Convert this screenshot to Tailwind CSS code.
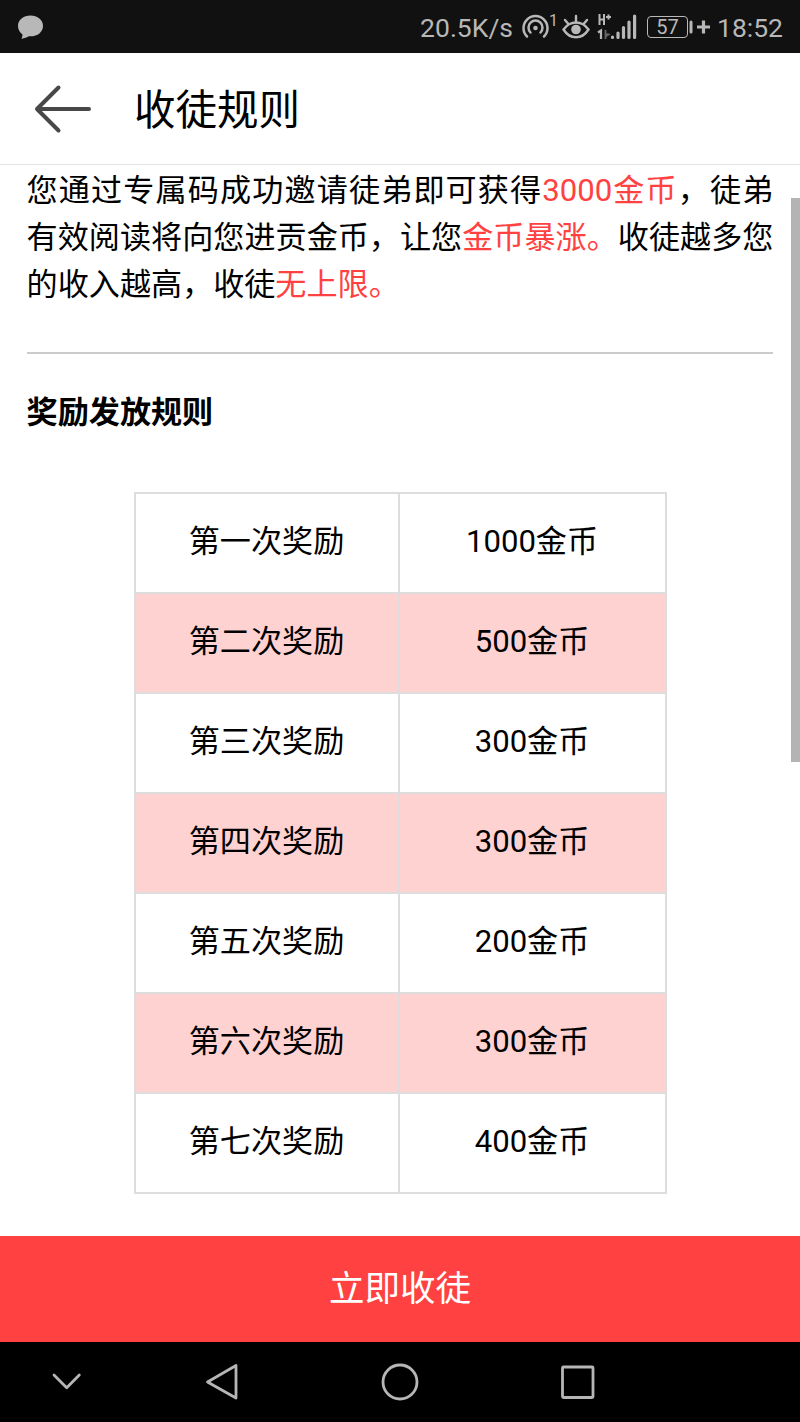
<!DOCTYPE html>
<html lang="zh-CN">
<head>
  <meta charset="UTF-8" />
  <meta name="viewport" content="width=device-width, initial-scale=1" />
  <title>收徒规则</title>
  <script src="https://cdn.jsdelivr.net/npm/@tailwindcss/browser@4"></script>
</head>
<body class="relative flex flex-col h-[1422px] overflow-hidden bg-white text-black font-[Roboto,'Noto_Sans_CJK_SC',sans-serif]">
  <!-- Status bar -->
  <div class="flex h-[53px] shrink-0 items-center justify-between bg-[#111] pl-[17px] pr-[17px] text-[#b8b8b8]">
    <svg class="h-[26px] w-[27px]" viewBox="0 0 27 26" fill="currentColor">
      <path d="M13.500 1.500C6.300 1.500 1 6 1 12c0 3.500 1.700 6.500 4.500 8.500-.1 1.800-.5 3-1 4.500 3-.7 5.500-1.700 7.500-2.700 8 .7 14-4 14-10.300 0-6-5.500-10.500-12.500-10.500z"/>
    </svg>
    <div class="flex items-center">
      <span class="mr-[8px] pt-[2px] text-[26.500px] leading-[51px]">20.5K/s</span>
      <!-- Hotspot -->
      <svg class="h-[30px] w-[38px]" viewBox="0 0 38 30" fill="none" stroke="currentColor" stroke-width="2.500" stroke-linecap="round">
        <path d="M6 24.500A12 12 0 1 1 23 24.500"/>
        <path d="M9.500 20.500A7 7 0 1 1 19.500 20.500"/>
        <circle cx="14.500" cy="16" r="2.300" fill="currentColor" stroke="none"/>
        <text x="28" y="14" font-size="16" fill="currentColor" stroke="none">1</text>
      </svg>
      <!-- Eye comfort -->
      <svg class="ml-[3px] h-[30px] w-[28px]" viewBox="0 0 28 30" fill="none" stroke="currentColor" stroke-width="2.400" stroke-linecap="round">
        <path d="M1.500 17.500C5 12.500 9 10.500 14 10.500s9 2 12.500 7C23 23 19 25.300 14 25.300S5 23 1.500 17.500z"/>
        <path d="M14 10V4M6 11.500L3 8M22 11.500l3-3.500"/>
        <circle cx="14" cy="17.500" r="4.800" fill="currentColor" stroke="none"/>
      </svg>
      <!-- Signal -->
      <svg class="ml-[7px] h-[30px] w-[42px]" viewBox="0 0 42 30" fill="none" stroke="currentColor">
        <path stroke-width="2" d="M2.500 2v11M7 2v11M2.500 7.500H7M9 5h5M11.500 2.500v5"/>
        <path stroke-width="2.200" d="M1 20.500l3-2v8.500"/>
        <path stroke="#666" stroke-width="1.800" d="M8.500 18v9M8.500 22l3 .5-3 2"/>
        <path stroke-width="3.200" stroke-linecap="round" d="M15.500 25v.5M21 21v4.500M26.500 15.500v10M32 10v15.500M37.600 4v21.500"/>
      </svg>
      <!-- Battery -->
      <div class="ml-[8px] flex h-[22px] w-[41px] items-center justify-center rounded-[4px] border-[1.500px] border-current text-[20px] leading-none">57</div>
      <svg class="h-[22px] w-[23px]" viewBox="0 0 23 22" fill="none" stroke="currentColor">
        <path stroke-width="3" stroke-linecap="round" d="M3 6v10"/>
        <path stroke-width="3.200" d="M9 11h13M15.500 4.500v13"/>
      </svg>
      <span class="ml-[6px] pt-[2px] text-[26.500px] leading-[51px]">18:52</span>
    </div>
  </div>

  <!-- Title bar -->
  <header class="flex h-[112px] shrink-0 items-center border-b border-[#e3e3e3] pl-[33px]">
    <svg class="h-[50px] w-[60px]" viewBox="0 0 60 50" fill="none" stroke="#484848" stroke-width="4" stroke-linecap="round" stroke-linejoin="round">
      <path d="M25.500 3.500L4 25 25.500 46.500M4 25h52"/>
    </svg>
    <h1 class="ml-[41px] pt-[4px] text-[41.500px] leading-[56px]">收徒规则</h1>
  </header>

  <!-- Rules -->
  <main class="flex flex-1 flex-col px-[26.600px] pt-[2px] text-[31.100px]">
    <p class="text-justify leading-[47px]">您通过专属码成功邀请徒弟即可获得<span class="text-[#ff4141]">3000金币</span>，徒弟有效阅读将向您进贡金币，让您<span class="text-[#ff4141]">金币暴涨。</span>收徒越多您的收入越高，收徒<span class="text-[#ff4141]">无上限。</span></p>
    <hr class="mt-[44px] border-t-2 border-[#ccc]" />
    <h2 class="mt-[35px] font-bold leading-[47px]">奖励发放规则</h2>
    <table class="mx-auto mt-[56px] w-[533px] table-fixed border-collapse text-center leading-[47px]">
      <tbody>
        <tr class="h-[100px]">
          <td class="w-[264px] border-2 border-[#ddd] pb-[3px]">第一次奖励</td>
          <td class="border-2 border-[#ddd] pb-[3px]">1000金币</td>
        </tr>
        <tr class="h-[100px] bg-[#ffd2d2]">
          <td class="border-2 border-[#ddd] pb-[3px]">第二次奖励</td>
          <td class="border-2 border-[#ddd] pb-[3px]">500金币</td>
        </tr>
        <tr class="h-[100px]">
          <td class="border-2 border-[#ddd] pb-[3px]">第三次奖励</td>
          <td class="border-2 border-[#ddd] pb-[3px]">300金币</td>
        </tr>
        <tr class="h-[100px] bg-[#ffd2d2]">
          <td class="border-2 border-[#ddd] pb-[3px]">第四次奖励</td>
          <td class="border-2 border-[#ddd] pb-[3px]">300金币</td>
        </tr>
        <tr class="h-[100px]">
          <td class="border-2 border-[#ddd] pb-[3px]">第五次奖励</td>
          <td class="border-2 border-[#ddd] pb-[3px]">200金币</td>
        </tr>
        <tr class="h-[100px] bg-[#ffd2d2]">
          <td class="border-2 border-[#ddd] pb-[3px]">第六次奖励</td>
          <td class="border-2 border-[#ddd] pb-[3px]">300金币</td>
        </tr>
        <tr class="h-[100px]">
          <td class="border-2 border-[#ddd] pb-[3px]">第七次奖励</td>
          <td class="border-2 border-[#ddd] pb-[3px]">400金币</td>
        </tr>
      </tbody>
    </table>
  </main>

  <button class="h-[106px] shrink-0 bg-[#ff4141] text-[35.500px] leading-[54px] text-white">立即收徒</button>

  <!-- Navigation bar -->
  <nav class="h-[80px] shrink-0 bg-black">
    <svg class="h-[80px] w-[800px]" viewBox="0 0 800 80" fill="none" stroke="#b8b5b8" stroke-width="2.800" stroke-linecap="round" stroke-linejoin="round">
      <path d="M54 33l12.700 12.700L79.300 33"/>
      <path d="M236 23.500v32.500L207.500 40z"/>
      <circle cx="400" cy="40" r="17"/>
      <rect x="562.500" y="25" width="30.500" height="30.500" rx="1"/>
    </svg>
  </nav>

  <!-- Scrollbar thumb -->
  <div class="absolute right-0 top-[198px] h-[564px] w-[9px] bg-[#b4b4b4]"></div>
</body>
</html>
